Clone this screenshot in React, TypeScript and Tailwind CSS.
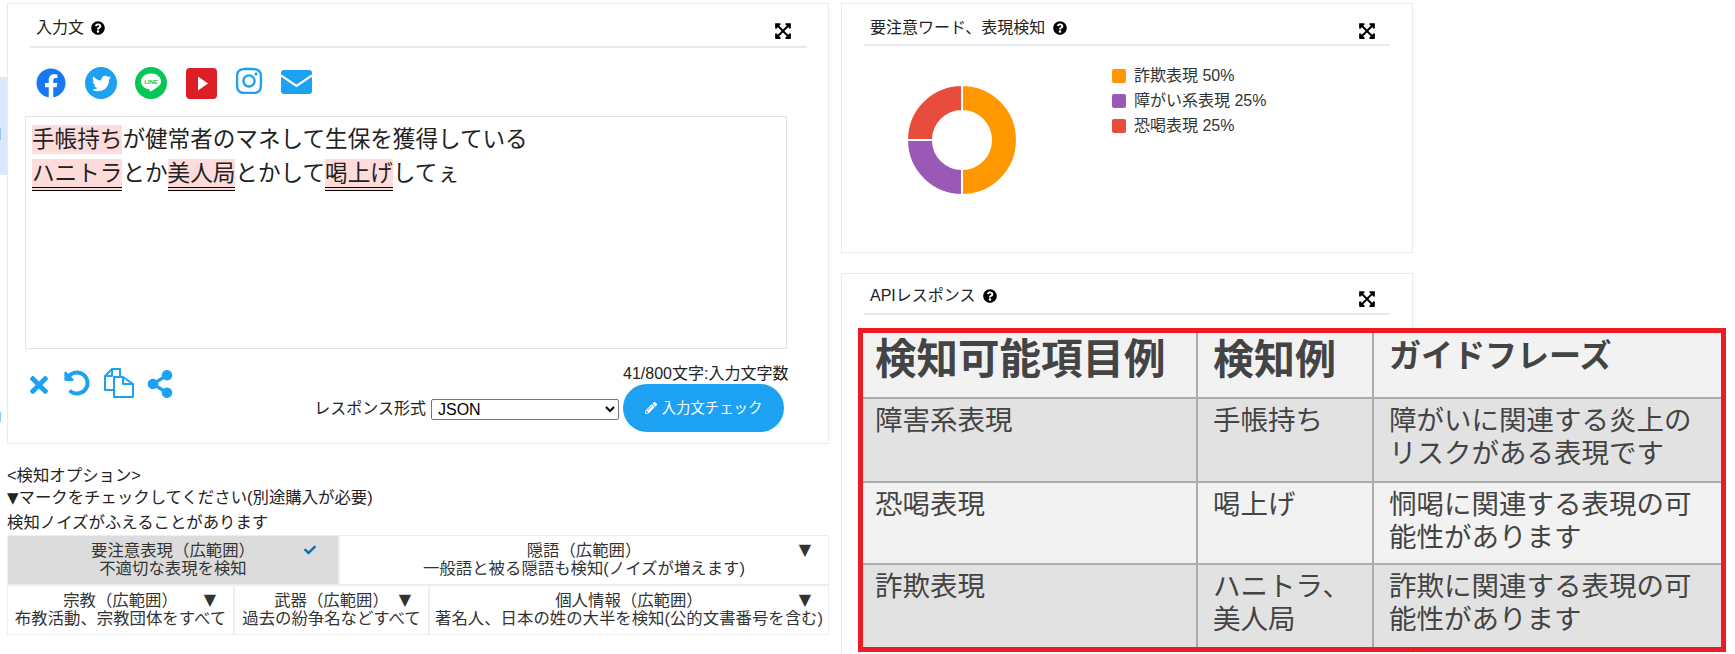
import { FaCheck, FaExpandArrowsAlt, FaFacebook, FaInstagram, FaPencilAlt, FaQuestionCircle, FaShareAlt, FaTimes, FaTwitter, FaUndoAlt } from 'react-icons/fa';

function PanelHeader({ title, lineClass, iconClass, textClass }: { title: string; lineClass: string; iconClass: string; textClass: string }) {
  return (
    <div className={`flex items-start justify-between border-b-2 border-[#e6eaee] ${lineClass}`}>
      <div className={`flex items-center text-[16px] leading-[24px] text-[#222] ${textClass}`}>
        <span>{title}</span>
        <FaQuestionCircle className="text-[14px] text-black" />
      </div>
      <FaExpandArrowsAlt className={`text-[18px] text-black ${iconClass}`} />
    </div>
  );
}

function Mark({ children, under }: { children: string; under?: boolean }) {
  return (
    <span className={`inline-block bg-[#ffdcdc] leading-[29px] ${under ? 'h-[32px] border-b-4 border-double border-black' : 'h-[29px]'}`}>
      {children}
    </span>
  );
}

function SocialIcons() {
  return (
    <div className="ml-[7px] mt-[19px] flex h-[32px] items-start">
      <FaFacebook className="mt-px h-[30px] w-[30px] text-[#1877f2]" />
      <div className="ml-[19px] flex h-[32px] w-[32px] items-center justify-center rounded-full bg-[#1da1f2]">
        <FaTwitter className="h-[19px] w-[19px] text-white" />
      </div>
      <svg className="ml-[18px]" width="32" height="32" viewBox="0 0 32 32">
        <circle cx="16" cy="16" r="16" fill="#06c755" />
        <path d="M16 6.500c-5.600 0-10 3.500-10 8 0 4 3.500 7.300 8.300 7.900.6.100.5.700.4 1.300-.1.600.2 1 .9.700 1.800-.9 8.400-4.800 10-7.700.3-.7.400-1.400.400-2.200 0-4.500-4.400-8-10-8z" fill="#fff" />
        <text x="16" y="17.300" textAnchor="middle" fontSize="6" fontWeight="700" fill="#06c755" fontFamily="Liberation Sans, sans-serif">LINE</text>
      </svg>
      <svg className="ml-[19px] mt-px" width="31" height="31" viewBox="0 0 31 31">
        <rect width="31" height="31" rx="4" fill="#dc1f26" />
        <path d="M12 8.500 22 15.500 12 22.500z" fill="#fff" />
      </svg>
      <FaInstagram className="ml-[17px] -mt-px h-[30px] w-[30px] text-[#1da1f2]" />
      <svg className="ml-[17px] mt-[3px]" width="31" height="24" viewBox="0 0 31 24">
        <rect width="31" height="24" rx="3" fill="#1da1f2" />
        <path d="M0 5.500 15.500 16 31 5.500" fill="none" stroke="#fff" strokeWidth="2.200" />
      </svg>
    </div>
  );
}

function CopyIcon() {
  return (
    <svg width="30" height="30" viewBox="0 0 30 30" fill="none" stroke="#1da1f2" strokeWidth="2">
      <path d="M9 22H1V8l7-7h8v8" strokeLinejoin="round" />
      <path d="M8 1v7H1" strokeLinejoin="round" />
      <path d="M10 29V9h9l10 7v13z" fill="#fff" strokeLinejoin="round" />
      <path d="M19 9v7h10" strokeLinejoin="round" />
    </svg>
  );
}

function OptionCell({ title, sub, className, active }: { title: string; sub: string; className: string; active?: boolean }) {
  return (
    <div className={`relative pt-[5px] text-center text-[16.4px] leading-[18px] text-[#333] ${active ? 'bg-[#dcdcdc]' : 'bg-white'} ${className}`}>
      <div>{title}</div>
      <div>{sub}</div>
      {active ? (
        <FaCheck className="absolute right-[22px] top-[8px] text-[12px] text-[#0d6eb8]" />
      ) : (
        <span className="absolute right-[17px] top-[5px] font-['DejaVu_Sans',sans-serif] text-[16px] leading-[18px] text-[#333]">▼</span>
      )}
    </div>
  );
}

function Donut() {
  return (
    <svg className="ml-[42px] mt-[38px] shrink-0" width="112" height="112" viewBox="-1 -1 110 110" stroke="#fff" strokeWidth="2">
      <path d="M54 0A54 54 0 0 1 54 108L54 82.500A28.500 28.500 0 0 0 54 25.500Z" fill="#ff9800" />
      <path d="M54 108A54 54 0 0 1 0 54L25.500 54A28.500 28.500 0 0 0 54 82.500Z" fill="#9b59b6" />
      <path d="M0 54A54 54 0 0 1 54 0L54 25.500A28.500 28.500 0 0 0 25.500 54Z" fill="#e74c3c" />
    </svg>
  );
}

function LegendRow({ label, color }: { label: string; color: string }) {
  return (
    <div className="flex h-[25px] items-center gap-[8px] text-[16px] text-[#333]">
      <span className={`h-[14px] w-[14px] rounded-[2px] ${color}`} />
      <span>{label}</span>
    </div>
  );
}

function Cell({ children, className }: { children: React.ReactNode; className: string }) {
  return <div className={`text-[27.5px] leading-[33px] text-[#444] ${className}`}>{children}</div>;
}

export default function App() {
  return (
    <div className="relative flex h-[654px] w-[1735px] overflow-hidden bg-white font-['Liberation_Sans','Noto_Sans_CJK_JP',sans-serif]">
      {/* cut off sidebar at the left edge */}
      <div className="w-[7px] shrink-0 pt-[77px]">
        <div className="h-[98px] bg-[#dbe8fc] pt-[51px]">
          <div className="h-[12px] w-[1px] bg-[#8cc8ff]" />
        </div>
        <div className="mt-[237px] h-[10px] w-[1px] bg-[#8cc8ff]" />
      </div>

      {/* left column */}
      <div className="w-[822px] shrink-0 pt-[3px]">
        <div className="h-[441px] border border-[#e8eaec] px-[21px]">
          <PanelHeader title="入力文" lineClass="h-[44px] ml-px" iconClass="mt-[18px] mr-[15px]" textClass="gap-[7px] pl-[6px] pt-[12px]" />
          <SocialIcons />
          <div className="-ml-[4px] mt-[17px] h-[233px] w-[762px] border border-[#e4e4e4] pl-[6px] pt-[6px] text-[22.6px] leading-[33px] text-[#222]">
            <div className="h-[34px]"><Mark>手帳持ち</Mark>が健常者のマネして生保を獲得している</div>
            <div className="h-[33px]"><Mark under>ハニトラ</Mark>とか<Mark under>美人局</Mark>とかして<Mark under>喝上げ</Mark>してぇ</div>
          </div>
          <div className="-ml-[1px] flex items-start">
            <div className="mt-[19px] flex items-start text-[#1da1f2]">
              <FaTimes className="-ml-[2px] mt-[4px] h-[26px] w-[26px]" />
              <FaUndoAlt className="ml-[12px] mt-[2px] h-[26px] w-[26px]" />
              <div className="ml-[14px]"><CopyIcon /></div>
              <FaShareAlt className="ml-[12px] mt-[2px] h-[28px] w-[28px]" />
            </div>
            <div className="ml-auto mr-[23px] mt-[15px] flex w-[475px] flex-col items-end text-[16px] leading-[20px] text-[#222]">
              <div className="w-[161px] whitespace-nowrap">41/800文字:入力文字数</div>
              <div className="flex items-center">
                <span className="mr-[5px] mt-[2px]">レスポンス形式</span>
                <select defaultValue="JSON" className="mr-[4px] mt-[2px] h-[21px] w-[188px] appearance-auto rounded-[2px] border border-[#767676] bg-white pl-[2px] text-[16px] leading-[18px] text-black">
                  <option>JSON</option>
                </select>
                <div className="flex h-[48px] w-[161px] items-center justify-center gap-[5px] rounded-full bg-[#1da1f2] text-[14.4px] text-white">
                  <FaPencilAlt className="text-[12px]" />
                  <span>入力文チェック</span>
                </div>
              </div>
            </div>
          </div>
        </div>

        <div className="mt-[19px] text-[16.4px] leading-[24px] text-[#222]">
          <div className="h-[22px]">&lt;検知オプション&gt;</div>
          <div><span className="font-['DejaVu_Sans',sans-serif] text-[15px]">▼</span>マークをチェックしてください(別途購入が必要)</div>
          <div>検知ノイズがふえることがあります</div>
        </div>
        <div className="mt-[1px] flex flex-col gap-[2px] bg-[#eeeeee] p-[1px]">
          <div className="flex gap-[2px]">
            <OptionCell active title="要注意表現（広範囲）" sub="不適切な表現を検知" className="h-[48px] w-[330px]" />
            <OptionCell title="隠語（広範囲）" sub="一般語と被る隠語も検知(ノイズが増えます)" className="h-[48px] flex-1" />
          </div>
          <div className="flex gap-[2px]">
            <OptionCell title="宗教（広範囲）" sub="布教活動、宗教団体をすべて" className="h-[48px] w-[225px]" />
            <OptionCell title="武器（広範囲）" sub="過去の紛争名などすべて" className="h-[48px] w-[193px]" />
            <OptionCell title="個人情報（広範囲）" sub="著名人、日本の姓の大半を検知(公的文書番号を含む)" className="h-[48px] flex-1" />
          </div>
        </div>
      </div>

      {/* right column */}
      <div className="ml-[12px] w-[572px] shrink-0 pt-[3px]">
        <div className="h-[250px] border border-[#e8eaec] px-[22px]">
          <PanelHeader title="要注意ワード、表現検知" lineClass="h-[42px]" iconClass="mt-[18px] mr-[14px]" textClass="gap-[8px] pl-[6px] pt-[12px]" />
          <div className="flex items-start">
            <Donut />
            <div className="ml-[94px] mt-[17px]">
              <LegendRow label="詐欺表現 50%" color="bg-[#ff9800]" />
              <LegendRow label="障がい系表現 25%" color="bg-[#9b59b6]" />
              <LegendRow label="恐喝表現 25%" color="bg-[#e74c3c]" />
            </div>
          </div>
        </div>
        <div className="mt-[20px] h-[400px] border border-[#e8eaec] px-[22px]">
          <PanelHeader title="APIレスポンス" lineClass="h-[41px]" iconClass="mt-[16px] mr-[14px]" textClass="gap-[8px] pl-[6px] pt-[10px]" />
        </div>
      </div>

      {/* table pasted on top of the page */}
      <div className="absolute left-[858px] top-[328px] grid h-[324px] w-[868px] grid-cols-[333px_174px_1fr] grid-rows-[64px_82px_80px_1fr] gap-[2px] border-[5px] border-[#ed1c24] bg-[#acacac]">
        <Cell className="bg-[#f2f2f2] pl-[12px] pt-[2px] text-[41.5px] font-bold leading-[50px]">検知可能項目例</Cell>
        <Cell className="bg-[#f2f2f2] pl-[15px] pt-[2px] text-[41px] font-bold leading-[50px]">検知例</Cell>
        <Cell className="bg-[#f2f2f2] pl-[15px] pt-[3px] text-[32px] font-bold leading-[40px]">ガイドフレーズ</Cell>

        <Cell className="bg-[#e2e2e2] pl-[12px] pt-[5px]">障害系表現</Cell>
        <Cell className="bg-[#e2e2e2] pl-[15px] pt-[5px]">手帳持ち</Cell>
        <Cell className="bg-[#e2e2e2] pl-[15px] pt-[5px]">障がいに関連する炎上の<br />リスクがある表現です</Cell>

        <Cell className="bg-[#f2f2f2] pl-[12px] pt-[5px]">恐喝表現</Cell>
        <Cell className="bg-[#f2f2f2] pl-[15px] pt-[5px]">喝上げ</Cell>
        <Cell className="bg-[#f2f2f2] pl-[15px] pt-[5px]">恫喝に関連する表現の可<br />能性があります</Cell>

        <Cell className="bg-[#e2e2e2] pl-[12px] pt-[5px]">詐欺表現</Cell>
        <Cell className="bg-[#e2e2e2] pl-[15px] pt-[5px]">ハニトラ、<br />美人局</Cell>
        <Cell className="bg-[#e2e2e2] pl-[15px] pt-[5px]">詐欺に関連する表現の可<br />能性があります</Cell>
      </div>
    </div>
  );
}
